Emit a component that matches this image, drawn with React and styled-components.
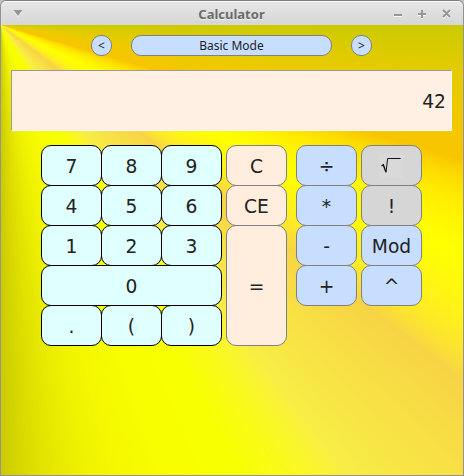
import React from "react";
import styled, { createGlobalStyle } from "styled-components";

const GlobalStyle = createGlobalStyle`
  * { box-sizing: border-box; }
  body { margin: 0; background: #c4c4c4; overflow: hidden; }
`;

const conic = `conic-gradient(from 0deg at 0 0,
  rgba(255,255,0,0.27) 90deg,
  rgba(255,203,0,0.51) 106.3deg,
  rgba(255,255,0,1) 116.4deg,
  rgba(255,218,71,0.51) 127.5deg,
  rgba(255,244,71,0.51) 142.3deg,
  rgba(247,255,0,0.816) 152.4deg,
  rgba(251,255,0,0.569) 162.1deg,
  rgba(255,255,0,0.27) 180deg)`;

const Window = styled.div`
  width: 464px;
  height: 476px;
  display: flex;
  flex-direction: column;
  border: 1px solid #939393;
  border-top-color: #7c7c7c;
  border-radius: 6px 6px 0 0;
  overflow: hidden;
`;

const TitleBar = styled.header`
  height: 24px;
  flex: none;
  display: grid;
  grid-template-columns: 72px 1fr 73px;
  align-items: center;
  border-top: 1px solid #fafafa;
  background: linear-gradient(#e6e6e6, #d6d6d6);
`;

const Title = styled.h1`
  margin: 0;
  text-align: center;
  font: bold 13px/18px "Noto Sans", sans-serif;
  color: #6b6b6b;
  text-shadow: 0 1px 0 #f2f2f2;
`;

const MenuIcon = styled.svg`
  margin: 0 0 2px 12px;
  display: block;
`;

const WindowControls = styled.svg`
  display: block;
`;

const Body = styled.main`
  flex: 1;
  display: flex;
  flex-direction: column;
  background: ${Array(5).fill(conic).join(", ")}, #000;
`;

const ModeBar = styled.nav`
  display: flex;
  gap: 19px;
  margin: 10px 0 0 90px;
`;

const ModeButton = styled.button`
  width: ${(p) => (p.$wide ? 201 : 21)}px;
  height: 21px;
  padding: 0;
  border: 1px solid #808080;
  border-radius: 10px;
  background: #c8deff;
  color: #222;
  font: 12px/19px "Noto Sans", sans-serif;
`;

const Display = styled.output`
  height: 61px;
  margin: 14px 11px 0 10px;
  padding: 2px 5px 0 0;
  display: flex;
  align-items: center;
  justify-content: flex-end;
  border: 1px solid #fff;
  border-top-color: #a09a96;
  border-left-color: #a09a96;
  background: #fff0e3;
  color: #222;
  font: 18.67px/22px "DejaVu Sans", sans-serif;
`;

const Keypad = styled.section`
  display: flex;
  align-items: flex-start;
  margin: 14px 0 0 40px;
`;

const KeyGroup = styled.div`
  display: grid;
  grid-template-columns: repeat(${(p) => p.$cols}, 60px);
  grid-auto-rows: 40px;
  column-gap: ${(p) => p.$gap || 0}px;
  margin-right: ${(p) => p.$after || 0}px;
`;

const tones = {
  digit: ["#e0ffff", "#000"],
  action: ["#ffeede", "#808080"],
  operator: ["#c8deff", "#808080"],
  special: ["#d6d6d6", "#808080"],
};

const Key = styled.button`
  grid-column: span ${(p) => p.$cols || 1};
  grid-row: span ${(p) => p.$rows || 1};
  display: flex;
  align-items: center;
  justify-content: center;
  margin: 0 -1px -1px 0;
  padding: 2px 0 0;
  border: 1px solid ${(p) => tones[p.$tone][1]};
  border-radius: 10px;
  background: ${(p) => tones[p.$tone][0]};
  color: #222;
  font: 18.67px/22px "DejaVu Sans", sans-serif;
`;

const RootDrawing = styled.svg`
  margin: 0 1px 2px 0;
`;

const SqrtIcon = () => (
  <RootDrawing width="24" height="24" viewBox="0 0 24 24" fill="none" aria-label="square root">
    <rect width="24" height="24" fill="#d9d9d9" />
    <path d="M2.5 12l1.8-1.2 2.5 7" stroke="#111" strokeWidth="1.4" />
    <path d="M7 18.5L8.6 4.5h13" stroke="#111" strokeWidth="1" />
  </RootDrawing>
);

const digits = ["7", "8", "9", "4", "5", "6", "1", "2", "3", "0", ".", "(", ")"];
const operators = [
  ["÷", "operator"],
  ["√", "special"],
  ["*", "operator"],
  ["!", "special"],
  ["-", "operator"],
  ["Mod", "operator"],
  ["+", "operator"],
  ["^", "operator"],
];

export default function App() {
  return (
    <>
      <GlobalStyle />
      <Window>
        <TitleBar>
          <MenuIcon width="10" height="8" viewBox="0 0 10 8">
            <path d="M.5 2h9L5 8z" fill="#fafafa" />
            <path d="M.5 1h9L5 7z" fill="#969696" />
          </MenuIcon>
          <Title>Calculator</Title>
          <WindowControls width="72" height="23" viewBox="0 0 72 23" fill="none" strokeWidth="2">
            <g stroke="#fafafa" transform="translate(0 1)">
              <path d="M4 13h8M28 12h8M32 8v8M53 8l7 7M60 8l-7 7" />
            </g>
            <g stroke="#969696">
              <path d="M4 13h8M28 12h8M32 8v8M53 8l7 7M60 8l-7 7" />
            </g>
          </WindowControls>
        </TitleBar>
        <Body>
          <ModeBar>
            <ModeButton>&lt;</ModeButton>
            <ModeButton $wide>Basic Mode</ModeButton>
            <ModeButton>&gt;</ModeButton>
          </ModeBar>
          <Display>42</Display>
          <Keypad>
            <KeyGroup $cols={3} $after={5}>
              {digits.map((d) => (
                <Key key={d} $tone="digit" $cols={d === "0" ? 3 : 1}>{d}</Key>
              ))}
            </KeyGroup>
            <KeyGroup $cols={1} $after={10}>
              <Key $tone="action">C</Key>
              <Key $tone="action">CE</Key>
              <Key $tone="action" $rows={3}>=</Key>
            </KeyGroup>
            <KeyGroup $cols={2} $gap={5}>
              {operators.map(([label, tone]) => (
                <Key key={label} $tone={tone}>{label === "√" ? <SqrtIcon /> : label}</Key>
              ))}
            </KeyGroup>
          </Keypad>
        </Body>
      </Window>
    </>
  );
}
